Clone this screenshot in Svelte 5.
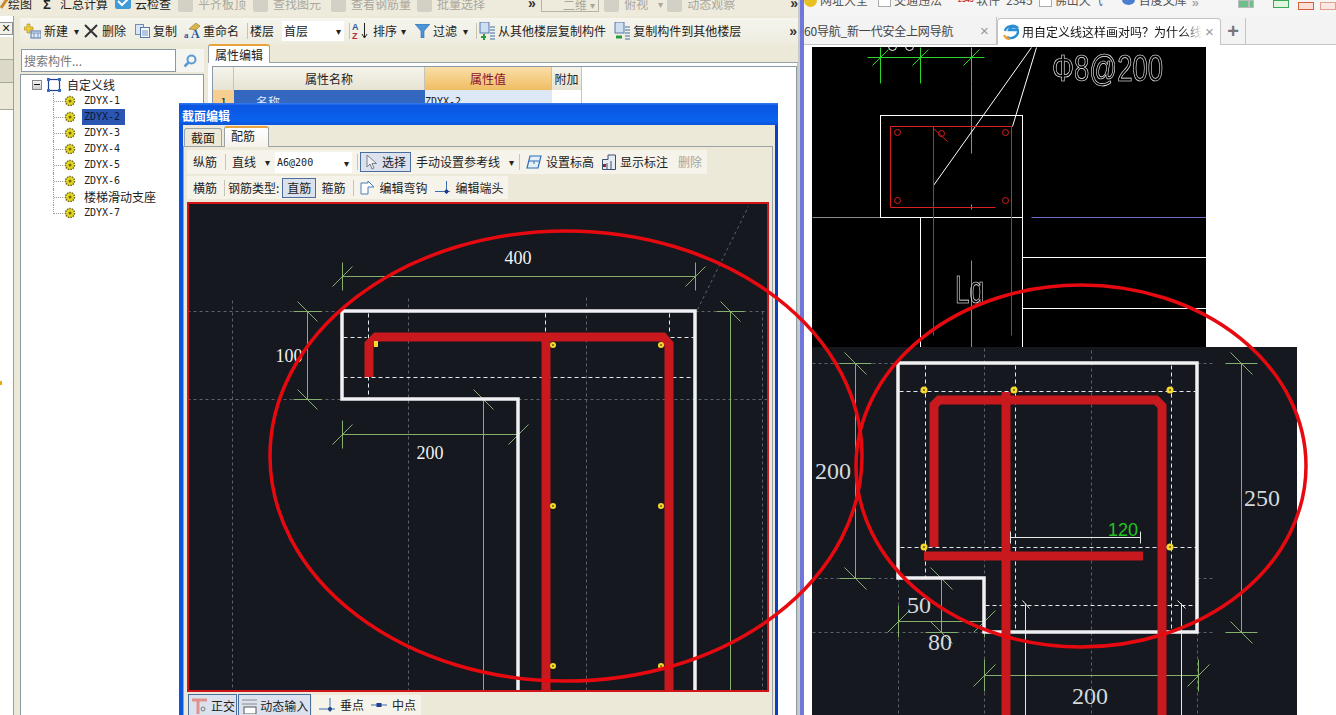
<script>
	const zdyx = ['ZDYX-1', 'ZDYX-2', 'ZDYX-3', 'ZDYX-4', 'ZDYX-5', 'ZDYX-6', '楼梯滑动支座', 'ZDYX-7'];

	// a dimension: main line, two end ticks, two slashes
	function hdim(x1, x2, y, t = 14, d = 10) {
		return [
			[x1, y, x2, y],
			[x1, y - t, x1, y + t],
			[x2, y - t, x2, y + t],
			[x1 - d, y + d, x1 + d, y - d],
			[x2 - d, y + d, x2 + d, y - d]
		];
	}
	function vdim(x, y1, y2, t = 14, d = 10) {
		return [
			[x, y1, x, y2],
			[x - t, y1, x + t, y1],
			[x - t, y2, x + t, y2],
			[x - d, y1 - d, x + d, y1 + d],
			[x - d, y2 - d, x + d, y2 + d]
		];
	}

	const leftGrid = [
		[187, 311, 342, 311], [187, 399, 342, 399], [518, 399, 769, 399], [695, 311, 769, 311],
		[232, 300, 232, 692], [408, 298, 408, 692], [586, 297, 586, 692], [762, 311, 762, 692],
		[697, 309, 748, 206]
	];
	const leftDash = [
		[343, 337, 366, 337], [670, 337, 693, 337], [343, 377, 693, 377],
		[368, 313, 368, 398], [545, 313, 545, 334], [669, 313, 669, 334]
	];
	const leftDims = [
		...hdim(342, 695, 276), ...vdim(307, 311, 399), ...hdim(342, 518, 434),
		...vdim(483, 399, 760), ...vdim(730, 311, 760)
	];
	const leftDots = [[553, 345], [661, 345], [553, 506], [661, 506], [553, 666], [661, 666]];

	const rightGrid = [
		[812, 363, 897, 363], [812, 578, 897, 578], [812, 632, 982, 632], [1197, 363, 1215, 363],
		[1197, 578, 1212, 578], [1197, 632, 1215, 632],
		[984, 348, 984, 578], [1091, 350, 1091, 715], [898, 578, 898, 715], [984, 632, 984, 715], [1197, 632, 1197, 715]
	];
	const rightDash = [
		[899, 391, 1195, 391], [900, 547, 1197, 547], [985, 605, 1197, 605],
		[925, 365, 925, 577], [1015, 365, 1015, 630], [1171, 365, 1171, 630]
	];
	const rightDims = [
		...vdim(855, 363, 578, 16, 11), ...vdim(1241, 363, 632, 16, 11),
		...hdim(898, 984, 621, 16, 11), ...vdim(941, 578, 632, 16, 11), ...hdim(984, 1198, 675, 16, 11)
	];
	const rightDots = [[924, 390], [1014, 390], [1170, 390], [924, 547], [1170, 547]];
</script>

<div class="root">
	<div class="app">
		<div class="menu">
			<span class="mi m0"><svg width="8" height="12" viewBox="0 0 8 12"><path d="M1 10 7 1" stroke="#c98a2c" stroke-width="3" /></svg>绘图</span>
			<span class="mi sigma"><b>Σ</b>汇总计算</span>
			<span class="mi"><svg width="16" height="14" viewBox="0 0 16 14"><rect width="16" height="14" y="-2" rx="2" fill="#3f9ad8" /><path d="M3 4 7 8 13 2" stroke="#fff" stroke-width="2" fill="none" /></svg>云检查</span>
			<span class="mi off"><i class="ghost"></i>平齐板顶</span>
			<span class="mi off"><i class="ghost"></i>查找图元</span>
			<span class="mi off m10"><i class="ghost"></i>查看钢筋量</span>
			<span class="mi off m6"><i class="ghost"></i>批量选择</span>
			<span class="more off-more">»</span>
			<span class="combo off">二维<em class="car">▾</em></span>
			<span class="mi off m5"><i class="ghost"></i>俯视<em class="car wide">▾</em></span>
			<span class="mi off m4"><i class="ghost"></i>动态观察</span>
			<span class="more end">»</span>
		</div>

		<div class="main">
			<div class="rail">
				<div class="xbox">×</div>
				<div class="rb a"></div>
				<div class="rb b"></div>
				<div class="rb a last"></div>
				<div class="mark"></div>
			</div>

			<div class="pane">
				<div class="toolbar">
					<div class="bar">
						<span class="ti new"><svg width="17" height="16" viewBox="0 0 17 16"><path d="M3 1h3v3h3v3H6v3H3V7H0V4h3z" fill="#f0c93a" stroke="#a98a20" stroke-width=".6" /><rect x="7" y="8" width="10" height="7" fill="#dfe8f5" stroke="#5577aa" /><path d="M7 10h10M10 10v5M14 10v5" stroke="#5577aa" stroke-width=".7" /></svg>新建<em class="car">▾</em></span>
						<span class="ti del"><svg width="14" height="14" viewBox="0 0 14 14"><path d="M1 1 13 13M13 1 1 13" stroke="#333" stroke-width="2" /></svg>删除</span>
						<span class="ti"><svg width="15" height="14" viewBox="0 0 15 14"><rect x=".5" y=".5" width="8" height="10" fill="#dbe6f4" stroke="#6f8fbb" /><rect x="5.5" y="3.5" width="9" height="10" fill="#f3f6fb" stroke="#5577aa" /><path d="M7 7h6M7 9h6M7 11h6" stroke="#7a97c2" /></svg>复制</span>
						<span class="ti"><svg width="16" height="16" viewBox="0 0 16 16"><path d="M5 6 12 0l4 3-4 4z" fill="#d9b64a" stroke="#8a7320" stroke-width=".6" /><text x="0" y="15" class="ic-a">a</text><text x="7" y="15" class="ic-b">A</text></svg>重命名</span>
						<span class="sep"></span>
						<span class="ti tight">楼层</span>
						<span class="field floor">首层<em class="car">▾</em></span>
						<span class="sep"></span>
						<span class="ti sort"><svg width="18" height="18" viewBox="0 0 18 18"><text x="0" y="8" class="ic-s blue">A</text><text x="0" y="17" class="ic-s red">Z</text><path d="M12.500 1v14M10 12l2.500 4 2.500-4" stroke="#222" stroke-width="1" fill="none" /></svg>排序<em class="car">▾</em></span>
						<span class="ti"><svg width="15" height="14" viewBox="0 0 15 14"><path d="M0 0h15L9 7v7H6V7z" fill="#4d93d8" stroke="#2b6cb0" stroke-width=".6" /></svg>过滤<em class="car">▾</em></span>
						<span class="sep"></span>
						<span class="ti copy"><svg width="16" height="18" viewBox="0 0 16 18"><rect x="1" y="0" width="9" height="11" fill="#cfdff2" stroke="#5577aa" /><path d="M11 5h5M11 8h5M11 11h5M11 14h5M11 17h5" stroke="#3a6ea8" /><path d="M2 15h5M5 12v6" stroke="#2a9a3c" stroke-width="2" /></svg>从其他楼层复制构件</span>
						<span class="ti"><svg width="16" height="18" viewBox="0 0 16 18"><rect x="1" y="0" width="9" height="11" fill="#cfdff2" stroke="#5577aa" /><path d="M11 5h5M11 8h5M11 11h5M11 14h5M11 17h5" stroke="#3a6ea8" /><path d="M2 15h6" stroke="#2a9a3c" stroke-width="3" /></svg>复制构件到其他楼层</span>
						<span class="more barmore">»</span>
					</div>
				</div>

				<div class="work">
					<div class="treecol">
						<div class="search">
							<span class="sinput">搜索构件...</span>
							<span class="sbtn"><svg width="14" height="14" viewBox="0 0 14 14"><circle cx="8.500" cy="5.500" r="4" fill="none" stroke="#5c9bd6" stroke-width="2" /><path d="M5.500 8.500 1.500 12.500" stroke="#5c9bd6" stroke-width="2.500" /></svg></span>
						</div>
						<div class="tree">
							<div class="root-node">
								<span class="minus"></span>
								<svg width="14" height="14" viewBox="0 0 14 14"><rect x="1.500" y="1.500" width="11" height="11" fill="none" stroke="#1f3f8f" stroke-width="1.200" /><path d="M0 0h3v3H0zM11 0h3v3h-3zM0 11h3v3H0zM11 11h3v3h-3z" fill="#3a6ac0" /></svg>
								<span class="rtxt">自定义线</span>
							</div>
							{#each zdyx as name}
								<div class="node">
									<i class="dots"></i>
									<svg width="12" height="12" viewBox="0 0 12 12"><circle cx="6" cy="6" r="4.500" fill="#e8d820" stroke="#6b6410" stroke-width="1.400" stroke-dasharray="1.500 1" /><circle cx="6" cy="6" r="1.500" fill="#6b6410" /></svg>
									<span class="ntxt" class:sel={name === 'ZDYX-2'} class:cjk={!name.startsWith('ZDYX')}>{name}</span>
								</div>
							{/each}
						</div>
					</div>

					<div class="props">
						<div class="ptabs"><span class="ptab">属性编辑</span></div>
						<div class="pbody">
							<div class="table">
								<div class="th"></div>
								<div class="th">属性名称</div>
								<div class="th val">属性值</div>
								<div class="th">附加</div>
								<div class="no">1</div>
								<div class="cname">名称</div>
								<div class="cval">ZDYX-2</div>
								<div class="cadd"></div>
							</div>
						</div>
					</div>
				</div>
			</div>
		</div>
	</div>

	<div class="split"></div>

	<div class="browser">
		<div class="favs">
			<span class="fav f1"><i class="fi coin"></i>网址大全</span>
			<span class="fav f2"><i class="fi page"></i>交通违法</span>
			<span class="fav f3"><i class="fi tag2345">2345</i>软件<span class="num">2345</span></span>
			<span class="fav f4"><i class="fi page"></i>佛山天气</span>
			<span class="fav f5"><i class="fi paw"></i>百度文库</span>
			<span class="fmore">»</span>
			<span class="ftools"><i class="g"></i><i class="r"></i><i class="g2"></i><i class="r2"></i><i class="r3"></i></span>
		</div>
		<div class="tabs">
			<div class="tab first"><span class="tlabel">60导航_新一代安全上网导航</span><span class="tx">×</span></div>
			<div class="tab active">
				<svg width="16" height="16" viewBox="0 0 16 16"><path d="M2 7c1-5 9-7 13-3-4-2-8-1-9 2h9c1 6-6 10-11 7" fill="none" stroke="#2b8fd6" stroke-width="2.400" /><path d="M1 11c1 2 3 4 6 4" fill="none" stroke="#f0a030" stroke-width="2.400" /></svg>
				<span class="tlabel fade">用自定义线这样画对吗？为什么线</span><span class="tx">×</span>
			</div>
			<div class="plus">+</div>
		</div>

		<div class="page-body">
			<svg class="cad1" width="394" height="300" viewBox="812 47 394 300">
				<rect x="812" y="47" width="394" height="300" fill="#000" />
				<g transform="translate(.5 .5)">
					<path d="M867 57H984M880 47V83M920 47V83M971 47V83M872 65 888 49M912 65 928 49M963 65 979 49" fill="none" stroke="#2bd62b" />
					<g fill="none" stroke="#fff"><circle cx="892" cy="46" r="4" /><circle cx="909" cy="46" r="4" /></g>
					<path d="M971 83V153M971 204V209M971 260V347M812 217H880" stroke="#8c8c8c" fill="none" />
					<path d="M1031 217H1206" stroke="#6a6ac8" />
					<g fill="none" stroke="#fff">
						<rect x="880" y="115" width="142" height="102" />
						<path d="M920 217V347M1022 217V347M1022 257H1206M1022 308H1206M1031 47 933 185M1036 47 1012 126" />
					</g>
					<g fill="none" stroke="#d82020">
						<path d="M995 207H890V126H1011V335M933 126V335M933 128 947 141" />
						<circle cx="897" cy="132" r="3" /><circle cx="1005" cy="132" r="3" /><circle cx="941" cy="133" r="3" />
						<circle cx="897" cy="200" r="3" /><circle cx="1005" cy="200" r="3" />
					</g>
				</g>
				<g class="flat">
					<text x="1052" y="81" class="outline big" textLength="111" lengthAdjust="spacingAndGlyphs">Φ8@200</text>
					<text x="955" y="303" class="outline mid" textLength="29" lengthAdjust="spacingAndGlyphs">Lɑ</text>
				</g>
			</svg>
			<svg class="cad2" width="485" height="368" viewBox="812 347 485 368">
				<rect x="812" y="347" width="485" height="368" fill="#15181f" />
				<g transform="translate(.5 .5)">
					{#each rightGrid as l}<line x1={l[0]} y1={l[1]} x2={l[2]} y2={l[3]} class="grid" />{/each}
					{#each rightDash as l}<line x1={l[0]} y1={l[1]} x2={l[2]} y2={l[3]} class="dash" />{/each}
					{#each rightDims as l}<line x1={l[0]} y1={l[1]} x2={l[2]} y2={l[3]} class="dim" />{/each}
				</g>
				<path d="M898 363H1197V632H984V578H898Z" class="wall" />
				<path d="M934 547V405L939 400H1156L1162 406V715M1006 392V715M924 556H1143" class="rebar" />
				<g transform="translate(.5 .5)">
					<path d="M1010 537H1140M1010 531V543M1140 531V543M1025 603V715M1181 603V715M1022 600 1029 608M1177 600 1185 608" class="thin" />
				</g>
				{#each rightDots as d}<circle cx={d[0]} cy={d[1]} r="3.500" class="dot" /><circle cx={d[0]} cy={d[1]} r="1" class="pip" />{/each}
				<text x="833" y="479" class="lab r">200</text>
				<text x="1262" y="506" class="lab r">250</text>
				<text x="919" y="613" class="lab r">50</text>
				<text x="940" y="650" class="lab r">80</text>
				<text x="1090" y="704" class="lab r">200</text>
				<text x="1123" y="536" class="lab g">120</text>
			</svg>
		</div>
	</div>

	<div class="dialog">
		<div class="dtitle">截面编辑</div>
		<div class="dbody">
			<div class="dtabs">
				<span class="dtab">截面</span>
				<span class="dtab on">配筋</span>
			</div>
			<div class="dpanel">
				<div class="drow r1">
					<span class="d lead">纵筋</span>
					<span class="sep s-a"></span>
					<span class="d">直线<em class="car">▾</em></span>
					<span class="field spec">A6@200<em class="car">▾</em></span>
					<span class="sep s-b"></span>
					<span class="d pressed sel-btn"><svg width="12" height="16" viewBox="0 0 12 16"><path d="M1 1V13L4 10 6 15 8 14 6 9.500H10.500Z" fill="#eef0f4" stroke="#7a8088" /></svg>选择</span>
					<span class="d ml5">手动设置参考线<em class="car">▾</em></span>
					<span class="sep s-c"></span>
					<span class="d"><svg width="16" height="14" viewBox="0 0 16 14"><path d="M4 1H15L12 13H1Z" fill="#e6eef8" stroke="#2d6fb8" stroke-width="1.200" /><path d="M3 6H13M8 6V9" stroke="#2d6fb8" /></svg>设置标高</span>
					<span class="d ml8"><svg width="14" height="16" viewBox="0 0 14 16"><path d="M.5 15.500V5.500H6V1H13.500V15.500Z" fill="#e7ecf3" stroke="#39506e" /><path d="M5 15V9M9 15V7" stroke="#39506e" /><rect x="1" y="10" width="3" height="3" fill="#a02030" /></svg>显示标注</span>
					<span class="d dim-txt ml10">删除</span>
				</div>
				<div class="drow r2">
					<span class="d lead">横筋</span>
					<span class="sep s-d"></span>
					<span class="d">钢筋类型:</span>
					<span class="d pressed straight">直筋</span>
					<span class="d ml5">箍筋</span>
					<span class="sep s-a2"></span>
					<span class="d"><svg width="15" height="15" viewBox="0 0 15 15"><path d="M1 3H8V1L14 7 8 7V14H1Z" fill="#fff" stroke="#4a7fb8" /></svg>编辑弯钩</span>
					<span class="d ml8"><svg width="16" height="15" viewBox="0 0 16 15"><path d="M0 11.500H15M11.500 1V14" stroke="#3a6fb0" stroke-width="1" fill="none" /><circle cx="11.500" cy="11.500" r="2" fill="#1f3f8f" /></svg>编辑端头</span>
				</div>
				<svg class="canvas" width="582" height="490" viewBox="187 202 582 490">
					<rect x="187" y="202" width="582" height="490" fill="#15181f" />
					<g transform="translate(.5 .5)">
						{#each leftGrid as l}<line x1={l[0]} y1={l[1]} x2={l[2]} y2={l[3]} class="grid" />{/each}
						{#each leftDash as l}<line x1={l[0]} y1={l[1]} x2={l[2]} y2={l[3]} class="dash" />{/each}
						{#each leftDims as l}<line x1={l[0]} y1={l[1]} x2={l[2]} y2={l[3]} class="dim" />{/each}
					</g>
					<path d="M518 700V399H342V311H695V700" class="wall" />
					<path d="M369 377V344L376 337H663L669 344V700M546 337V700" class="rebar" />
					{#each leftDots as d}<circle cx={d[0]} cy={d[1]} r="3" class="dot" /><circle cx={d[0]} cy={d[1]} r="1" class="pip" />{/each}
					<rect x="374" y="341" width="4" height="6" fill="#f5d92e" />
					<text x="518" y="264" class="lab w">400</text>
					<text x="289" y="362" class="lab w">100</text>
					<text x="430" y="459" class="lab w">200</text>
					<rect x="188" y="203" width="580" height="488" fill="none" stroke="#d0141a" stroke-width="2" />
				</svg>
				<div class="drow r3">
					<span class="d pressed sb w50"><svg width="18" height="16" viewBox="0 0 18 16"><path d="M1 2H16M7 2V16" stroke="#e0918c" stroke-width="3" fill="none" /><circle cx="12" cy="11" r="2" fill="none" stroke="#777" /></svg>正交</span>
					<span class="d pressed sb w74"><svg width="17" height="16" viewBox="0 0 17 16"><path d="M1 2H16M1 6H16" stroke="#888" /><rect x="3" y="9" width="12" height="7" fill="#fff" stroke="#555" /></svg>动态输入</span>
					<span class="snaps">
						<span class="d"><svg width="17" height="14" viewBox="0 0 17 14"><path d="M0 11H16M11 0V14" stroke="#3a6fb0" fill="none" /><circle cx="11" cy="11" r="2" fill="#1f3f8f" /></svg>垂点</span>
						<span class="d ml7"><svg width="17" height="14" viewBox="0 0 17 14"><path d="M0 7H16" stroke="#7d94c8" stroke-width="1.500" /><rect x="5.500" y="5" width="5" height="4" fill="#1f3f8f" /></svg>中点</span>
					</span>
				</div>
			</div>
		</div>
	</div>

	<svg class="ink" width="1336" height="715" viewBox="0 0 1336 715">
		<ellipse cx="566" cy="456" rx="296" ry="225" />
		<ellipse cx="1081" cy="466" rx="225" ry="181" />
	</svg>
</div>

<style>
	:global(body) {
		margin: 0;
		background: #fff;
	}
	.root {
		position: relative;
		display: flex;
		width: 1336px;
		height: 715px;
		overflow: hidden;
		font: 12px/16px 'Noto Sans CJK SC', 'Liberation Sans', sans-serif;
		color: #222;
	}
	em {
		font-style: normal;
	}
	.car {
		font-size: 10px;
		margin-left: 3px;
		color: #222;
	}

	/* left application */
	.app {
		display: flex;
		flex-direction: column;
		width: 798px;
		background: #ece9d8;
		border-right: 2px solid #c9ccc6;
		flex: none;
	}
	.menu {
		display: flex;
		align-items: flex-start;
		height: 16px;
		overflow: hidden;
		background: #eeebdd;
		flex: none;
	}
	.mi {
		display: inline-flex;
		align-items: center;
		gap: 4px;
		margin: -4px 0 0 7px;
		height: 16px;
		white-space: nowrap;
	}
	.mi svg {
		flex: none;
	}
	.mi.m0 {
		margin-left: 0;
		gap: 0;
	}
	.mi.sigma {
		margin-left: 11px;
		gap: 0;
	}
	.mi.m10 {
		margin-left: 10px;
	}
	.mi.m6 {
		margin-left: 6px;
	}
	.mi.m5 {
		margin-left: 5px;
	}
	.mi.m4 {
		margin-left: 4px;
	}
	.sigma b {
		width: 17px;
		font: 700 13px 'Liberation Sans', sans-serif;
	}
	.off {
		color: #a9a79c;
	}
	.off .car {
		color: #a9a79c;
	}
	.car.wide {
		margin-left: 6px;
	}
	.ghost {
		display: block;
		width: 15px;
		height: 14px;
		margin: 2px 1px 0 0;
		background: #d3d1c5;
		border-radius: 2px;
	}
	.more {
		font: 700 14px/12px 'Liberation Sans', sans-serif;
		color: #333;
	}
	.off-more {
		margin: -3px 5px 0 43px;
	}
	.combo {
		display: flex;
		justify-content: space-between;
		width: 61px;
		height: 16px;
		box-sizing: border-box;
		margin-top: -4px;
		padding: 0 3px 0 21px;
		border: 1px solid #b5b3a8;
		line-height: 16px;
	}
	.end {
		margin: -3px 0 0 55px;
	}

	.main {
		display: flex;
		flex: 1;
		min-height: 0;
	}
	.rail {
		position: relative;
		display: flex;
		flex-direction: column;
		width: 13px;
		padding-top: 6px;
		background: #fff;
		border-right: 1px solid #9aa0a0;
		flex: none;
	}
	.xbox {
		height: 11px;
		margin-bottom: 2px;
		border: 1px solid #8e9296;
		border-left: 0;
		background: #f3f1e6;
		font: 14px/10px 'Liberation Sans', sans-serif;
		text-align: center;
	}
	.rb {
		border-bottom: 1px solid #a9a89c;
	}
	.rb.a {
		height: 22px;
		background: #ece9d8;
	}
	.rb.b {
		height: 22px;
		background: #dcd9c8;
	}
	.rb.last {
		height: 26px;
	}
	.mark {
		position: absolute;
		left: 0;
		top: 365px;
		width: 2px;
		height: 4px;
		background: #e0b000;
	}

	.pane {
		display: flex;
		flex: 1;
		flex-direction: column;
		min-width: 0;
	}
	.toolbar {
		height: 28px;
		padding: 2px 0 0 6px;
		box-sizing: border-box;
		flex: none;
	}
	.bar {
		display: flex;
		align-items: center;
		height: 26px;
		padding-left: 4px;
		background: linear-gradient(#f6f5ee, #eeecdf);
		white-space: nowrap;
	}
	.ti {
		display: inline-flex;
		align-items: center;
		gap: 3px;
		margin-right: 7px;
	}
	.ti.new {
		margin-right: 5px;
	}
	.ti.del {
		gap: 4px;
		margin-right: 9px;
	}
	.ti.tight {
		margin-right: 8px;
	}
	.ti.sort {
		margin-right: 9px;
	}
	.ti.sort .car {
		margin-left: 1px;
	}
	.ti.copy {
		margin-right: 8px;
	}
	.sep {
		display: inline-block;
		width: 1px;
		height: 16px;
		margin: 0 2px 0 1px;
		background: #c6c4b8;
		flex: none;
	}
	.sep.s-a {
		margin: 0 6px 0 8px;
	}
	.sep.s-a2 {
		margin: 0 6px 0 8px;
	}
	.sep.s-b {
		margin: 0 2px 0 5px;
	}
	.sep.s-c {
		margin: 0 6px 0 5px;
	}
	.sep.s-d {
		margin: 0 3px 0 7px;
	}
	.field {
		display: inline-flex;
		align-items: center;
		justify-content: space-between;
		background: #fff;
		box-sizing: border-box;
	}
	.floor {
		width: 62px;
		height: 20px;
		padding: 0 3px 0 2px;
		margin-right: 4px;
	}
	.ic-a,
	.ic-b {
		font: 700 9px 'Liberation Serif', serif;
		fill: #2a5aa0;
	}
	.ic-b {
		font-size: 12px;
	}
	.ic-s {
		font: 700 9px 'Liberation Sans', sans-serif;
	}
	.blue {
		fill: #2a5aa0;
	}
	.red {
		fill: #b03040;
	}
	.barmore {
		margin-left: 41px;
	}

	.work {
		display: flex;
		flex: 1;
		min-height: 0;
		padding-left: 6px;
	}
	.treecol {
		display: flex;
		flex-direction: column;
		width: 184px;
		padding-top: 5px;
		box-sizing: border-box;
		flex: none;
	}
	.search {
		display: flex;
		height: 23px;
		flex: none;
	}
	.sinput {
		width: 155px;
		margin-left: 1px;
		padding-left: 2px;
		box-sizing: border-box;
		border: 1px solid #8a99a6;
		background: #fff;
		color: #777;
		line-height: 21px;
	}
	.sbtn {
		display: flex;
		align-items: center;
		justify-content: center;
		flex: 1;
		background: #f4f4f0;
	}
	.tree {
		flex: 1;
		margin-top: 2px;
		padding: 2px 0 0 11px;
		background: #fff;
		border: 1px solid #8a99a6;
		border-bottom: 0;
	}
	.root-node {
		display: flex;
		align-items: center;
		height: 16px;
	}
	.minus {
		display: block;
		width: 8px;
		height: 8px;
		margin-right: 5px;
		border: 1px solid #888;
		background: linear-gradient(#f4f4f4, #ccc);
		position: relative;
	}
	.minus::after {
		content: '';
		position: absolute;
		left: 1px;
		top: 3px;
		width: 6px;
		height: 1px;
		background: #111;
	}
	.rtxt {
		margin-left: 6px;
	}
	.node {
		display: flex;
		align-items: center;
		height: 16px;
		padding-left: 21px;
	}
	.dots {
		display: block;
		width: 10px;
		height: 16px;
		margin-right: 1px;
		box-sizing: border-box;
		border-left: 1px dotted #999;
		position: relative;
	}
	.dots::after {
		content: '';
		position: absolute;
		left: 0;
		top: 8px;
		width: 9px;
		border-top: 1px dotted #999;
	}
	.node:last-child .dots {
		height: 9px;
		align-self: flex-start;
	}
	.ntxt {
		margin-left: 6px;
		padding: 0 2px;
		font: 10px/16px 'DejaVu Sans Mono', monospace;
		color: #222;
		white-space: nowrap;
	}
	.ntxt.cjk {
		font: 12px/16px 'Noto Sans CJK SC', sans-serif;
	}
	.ntxt.sel {
		background: #2a55b0;
		color: #0c1a3c;
		padding-right: 5px;
	}

	.props {
		flex: 1;
		min-width: 0;
		margin-left: 4px;
		display: flex;
		flex-direction: column;
	}
	.ptabs {
		height: 19px;
		flex: none;
	}
	.ptab {
		display: inline-block;
		width: 62px;
		height: 19px;
		box-sizing: border-box;
		border: 1px solid #9aa3a8;
		border-top: 2px solid #e8a33c;
		border-bottom: 0;
		border-radius: 3px 3px 0 0;
		background: #fff;
		text-align: center;
		line-height: 17px;
		position: relative;
		z-index: 1;
	}
	.pbody {
		flex: 1;
		padding: 3px 0 0 4px;
		margin-top: -1px;
		background: #fff;
		border-top: 1px solid #9aa3a8;
		border-right: 1px solid #c0c4c0;
	}
	.table {
		display: grid;
		grid-template-columns: 21px 191px 127px 30px;
		grid-template-rows: 23px 23px;
		height: 100%;
		box-sizing: border-box;
		border: 1px solid #8a99a6;
		border-bottom: 0;
		align-content: start;
	}
	.th {
		display: flex;
		align-items: center;
		justify-content: center;
		background: linear-gradient(#f6f5ec, #e6e3d3);
		border-right: 1px solid #c4c4ba;
	}
	.th.val {
		background: linear-gradient(#f9dfa8, #f0bd63);
		color: #8c1030;
	}
	.no {
		background: #f6cf90;
		text-align: center;
		line-height: 23px;
	}
	.cname {
		background: #3468c0;
		color: #dfe8f8;
		padding-left: 22px;
		line-height: 23px;
	}
	.cval {
		background: #dce8f6;
		font: 10px/23px 'DejaVu Sans Mono', monospace;
	}
	.cadd {
		border-right: 1px solid #c4c4ba;
	}

	.split {
		width: 4px;
		background: #6f77d8;
		flex: none;
	}

	/* browser */
	.browser {
		display: flex;
		flex: 1;
		flex-direction: column;
		min-width: 0;
	}
	.favs {
		position: relative;
		display: flex;
		height: 15px;
		overflow: hidden;
		background: #f5f5f5;
		flex: none;
		color: #555;
	}
	.fav {
		display: inline-flex;
		align-items: center;
		height: 16px;
		margin-top: -8px;
		white-space: nowrap;
	}
	.f2 {
		margin-left: 10px;
	}
	.f3 {
		margin-left: 16px;
	}
	.f4 {
		margin-left: 6px;
	}
	.f5 {
		margin-left: 19px;
	}
	.num {
		margin-left: 6px;
	}
	.fi {
		display: block;
		flex: none;
		width: 13px;
		height: 14px;
		margin-right: 3px;
	}
	.coin {
		background: #e8c020;
		border-radius: 50%;
	}
	.page {
		background: #fff;
		border: 1px solid #aaa;
		box-sizing: border-box;
	}
	.tag2345 {
		width: 15px;
		font: 700 7px/14px 'Liberation Sans', sans-serif;
		color: #c03030;
		font-style: normal;
	}
	.paw {
		background: #4a7fd0;
		border-radius: 50%;
		height: 10px;
		margin-right: 4px;
	}
	.fmore {
		margin: -3px 0 0 5px;
		color: #aaa;
		font: 700 13px/12px 'Liberation Sans', sans-serif;
	}
	.ftools {
		position: absolute;
		right: 0;
		top: 0;
		display: flex;
		gap: 6px;
	}
	.ftools i {
		display: block;
		width: 14px;
		height: 6px;
		border: 1px solid #bbb;
	}
	.ftools .g {
		background: #6bc08a;
		margin-right: 11px;
	}
	.ftools .r {
		background: #ee9a8a;
		width: 0;
		margin-left: -23px;
		margin-right: 17px;
	}
	.ftools .g2 {
		background: #dff5e0;
		border-color: #3aaa5a;
		margin-right: 3px;
	}
	.ftools .r2 {
		background: #fbe0d8;
		border-color: #d06040;
	}
	.ftools .r3 {
		background: #fbe8e0;
		border-color: #e0a090;
	}
	.tabs {
		display: flex;
		align-items: flex-end;
		height: 30px;
		background: #f3f3f3;
		border-bottom: 1px solid #c4c4c4;
		box-sizing: border-box;
		flex: none;
	}
	.tab {
		display: flex;
		align-items: center;
		height: 27px;
		box-sizing: border-box;
		white-space: nowrap;
	}
	.tab.first {
		width: 193px;
		border-right: 1px solid #c4c4c4;
	}
	.tab.active {
		width: 224px;
		margin-bottom: -1px;
		padding-left: 5px;
		background: #fff;
		border: 1px solid #c4c4c4;
		border-bottom: 0;
		border-radius: 4px 4px 0 0;
		color: #111;
	}
	.tlabel {
		overflow: hidden;
	}
	.first .tlabel {
		width: 173px;
		color: #444;
		letter-spacing: -0.2px;
	}
	.fade {
		width: 180px;
		margin-left: 3px;
		mask-image: linear-gradient(90deg, #000 90%, transparent);
	}
	.tx {
		margin-left: 3px;
		font: 15px/16px 'Liberation Sans', sans-serif;
		color: #999;
	}
	.plus {
		width: 24px;
		height: 26px;
		border-right: 1px solid #c4c4c4;
		text-align: center;
		font: 700 20px/26px 'Liberation Sans', sans-serif;
		color: #777;
	}
	.page-body {
		display: flex;
		flex-direction: column;
		flex: 1;
		padding: 2px 0 0 8px;
		background: #fff;
	}
	.cad1,
	.cad2,
	.canvas {
		display: block;
		flex: none;
	}
	.flat {
		opacity: 0.98;
	}
	.outline {
		fill: none;
		stroke: #fff;
		stroke-width: 0.7;
		font-family: 'Liberation Sans', 'DejaVu Sans', sans-serif;
	}
	.big {
		font-size: 36px;
	}
	.mid {
		font-size: 38px;
	}

	/* cad drawing */
	.grid {
		stroke: #5d6268;
		stroke-width: 1;
		stroke-dasharray: 3 3;
	}
	.dash {
		stroke: #e6e8f0;
		stroke-width: 1;
		stroke-dasharray: 4 3;
	}
	.dim {
		stroke: #86ae6c;
		stroke-width: 1;
	}
	.wall {
		fill: none;
		stroke: #f1f1f4;
		stroke-width: 3.5;
	}
	.rebar {
		fill: none;
		stroke: #c8191f;
		stroke-width: 9;
	}
	.thin {
		fill: none;
		stroke: #e6e8e6;
		stroke-width: 1;
	}
	.dot {
		fill: #f5d92e;
	}
	.pip {
		fill: #6d5c10;
	}
	.lab {
		font-family: 'Liberation Serif', serif;
		text-anchor: middle;
	}
	.lab.w {
		font-size: 18px;
		fill: #f2f2f2;
	}
	.lab.r {
		font-size: 24px;
		fill: #d4d8dc;
	}
	.lab.g {
		font-size: 18px;
		fill: #22c322;
		font-family: 'Liberation Sans', sans-serif;
	}

	/* dialog over the property panel */
	.dialog {
		position: absolute;
		left: 179px;
		top: 103px;
		display: flex;
		flex-direction: column;
		width: 599px;
		height: 612px;
		box-sizing: border-box;
		border-right: 3px solid #0b3fc4;
		border-left: 4px solid #0a55e0;
		background: #ece9d8;
	}
	.dtitle {
		height: 22px;
		margin: 0 -3px 0 -4px;
		padding-left: 3px;
		background: linear-gradient(#3a7cf0 0, #0a55e2 12%, #0a63ee 80%, #0b54d8);
		color: #fff;
		font-weight: 700;
		line-height: 25px;
		flex: none;
	}
	.dbody {
		display: flex;
		flex-direction: column;
		flex: 1;
		min-height: 0;
	}
	.dtabs {
		display: flex;
		align-items: flex-end;
		gap: 2px;
		height: 21px;
		padding-left: 1px;
		flex: none;
	}
	.dtab {
		width: 38px;
		height: 18px;
		box-sizing: border-box;
		border: 1px solid #9aa3a8;
		border-bottom: 0;
		border-radius: 3px 3px 0 0;
		background: #ece9d8;
		text-align: center;
		line-height: 18px;
	}
	.dtab.on {
		width: 45px;
		height: 21px;
		padding-left: 6px;
		border-top: 2px solid #e8a33c;
		background: linear-gradient(#fff, #f5f3ea);
		margin-bottom: -1px;
		position: relative;
		z-index: 1;
		text-align: left;
		line-height: 15px;
	}
	.dpanel {
		display: flex;
		flex-direction: column;
		flex: 1;
		width: 590px;
		min-height: 0;
		box-sizing: border-box;
		padding: 3px 0 0 3px;
		border: 1px solid #9aa3a8;
		border-bottom: 0;
	}
	.drow {
		display: flex;
		align-items: center;
		white-space: nowrap;
		background: #f5f3ea;
		flex: none;
	}
	.r1 {
		width: 520px;
		height: 24px;
	}
	.r2 {
		width: 321px;
		height: 23px;
		margin-top: 2px;
	}
	.r3 {
		width: 234px;
		height: 22px;
		margin-top: 2px;
		background: none;
	}
	.canvas {
		margin-top: 3px;
	}
	.d {
		display: inline-flex;
		align-items: center;
		gap: 4px;
	}
	.d .car {
		margin-left: 5px;
	}
	.lead {
		margin-left: 6px;
	}
	.ml5 {
		margin-left: 5px;
	}
	.ml7 {
		margin-left: 7px;
	}
	.ml8 {
		margin-left: 8px;
	}
	.ml10 {
		margin-left: 10px;
	}
	.spec {
		width: 77px;
		height: 21px;
		margin-left: 5px;
		padding: 0 3px 0 2px;
		font: 10px 'DejaVu Sans Mono', monospace;
	}
	.spec .car {
		font-family: 'Noto Sans CJK SC', sans-serif;
	}
	.pressed {
		box-sizing: border-box;
		height: 20px;
		border: 1px solid #4b6e9f;
		background: #dbe2ee;
	}
	.straight {
		margin-left: 3px;
		padding: 0 4px;
	}
	.sel-btn {
		width: 51px;
		padding-left: 5px;
	}
	.dim-txt {
		color: #a5a5a0;
	}
	.sb {
		height: 22px;
		padding-left: 2px;
		margin-left: 1px;
		white-space: nowrap;
		border-bottom: 0;
		gap: 2px;
	}
	.w50 {
		width: 50px;
	}
	.w74 {
		width: 74px;
	}
	.snaps {
		display: flex;
		align-items: center;
		height: 21px;
		margin-left: 1px;
		padding: 0 5px 0 7px;
		background: #f5f3ea;
	}

	/* the red rings drawn over the screenshot */
	.ink {
		position: absolute;
		left: 0;
		top: 0;
		pointer-events: none;
	}
	.ink ellipse {
		fill: none;
		stroke: #e60a10;
		stroke-width: 3.5;
	}
</style>
